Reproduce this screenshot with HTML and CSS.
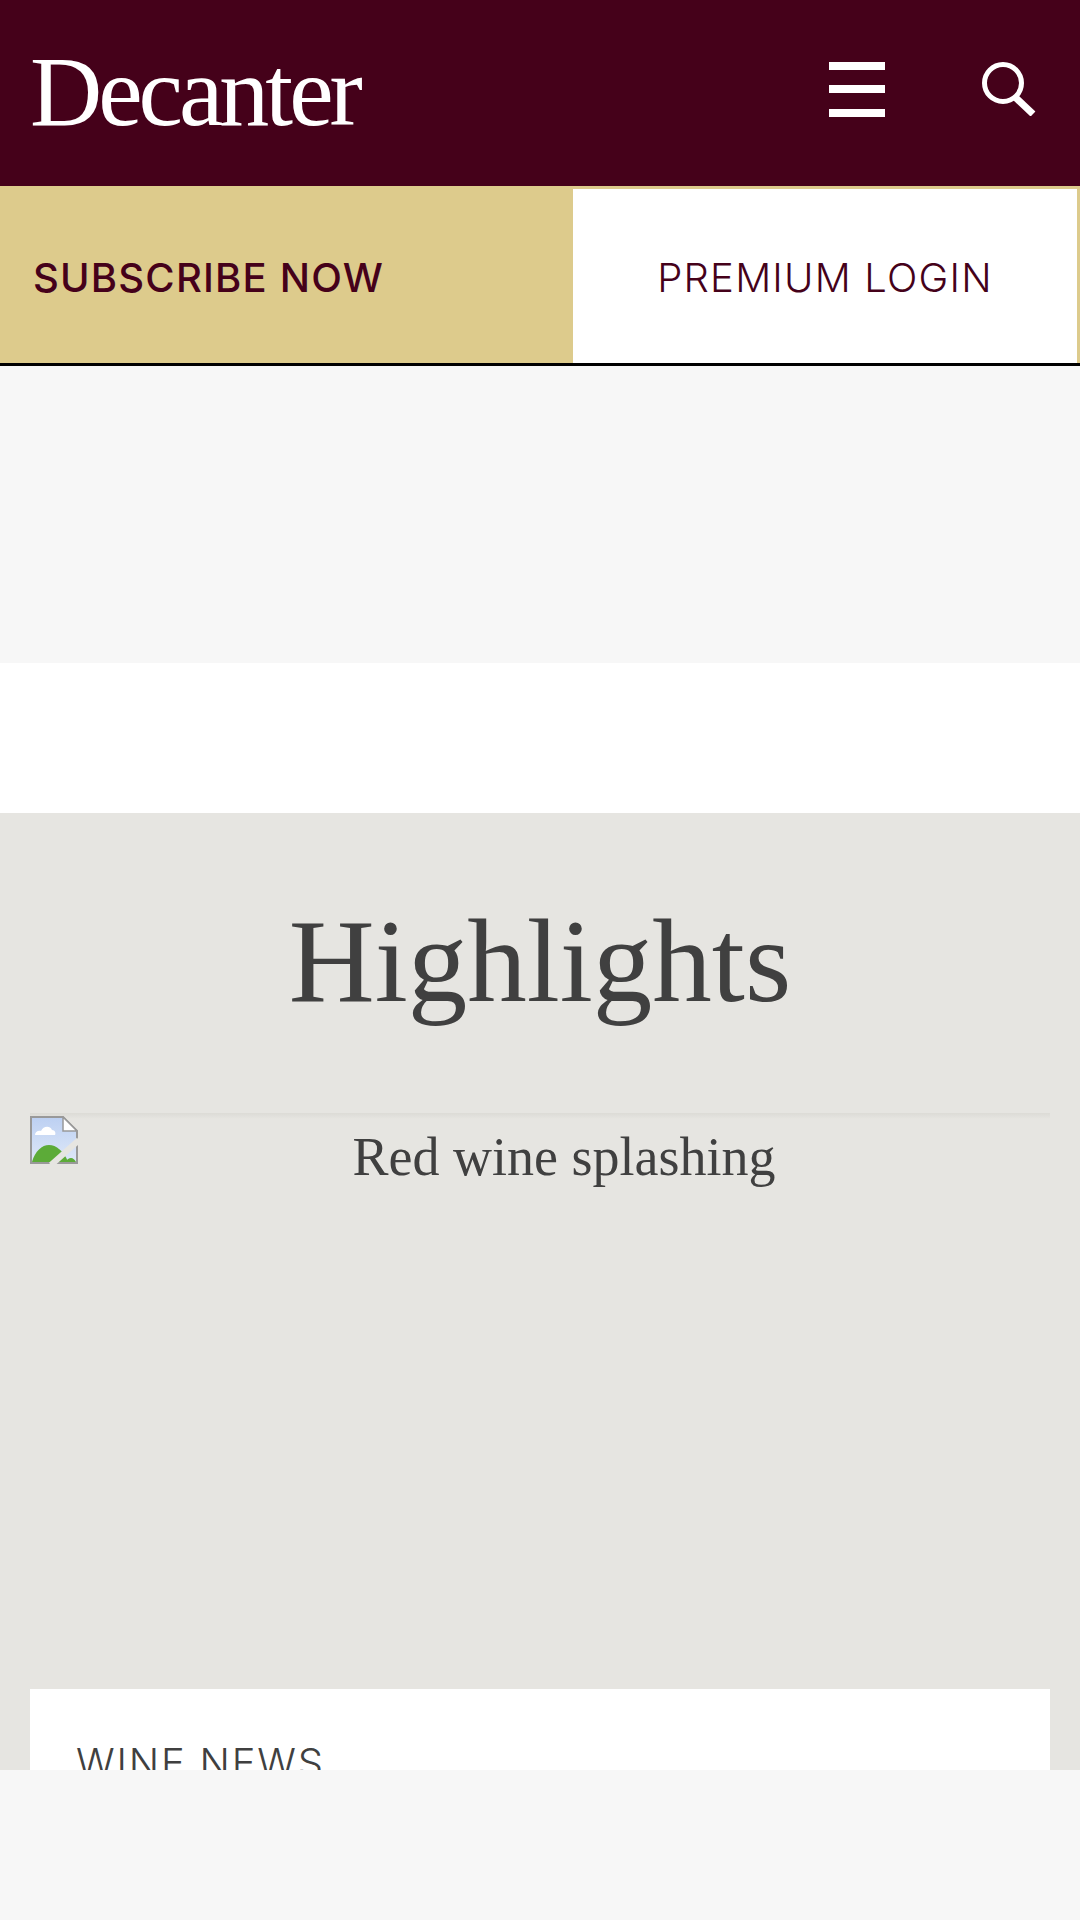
FILE: index.html
```html
<!DOCTYPE html>
<html lang="en">
<head>
<meta charset="utf-8">
<title>Decanter</title>
<link rel="stylesheet" href="styles.css">
</head>
<body>
<header class="masthead">
  <a class="logo">Decanter</a>
  <div class="masthead-icons">
    <div class="burger"><span></span><span></span><span></span></div>
    <svg class="search" viewBox="0 0 54 54" fill="none" stroke="#fff"><circle cx="21" cy="21" r="18.5" stroke-width="5"/><path d="M33 35 L51 52" stroke-width="7"/></svg>
  </div>
</header>
<nav class="account">
  <a class="btn btn-sub">SUBSCRIBE NOW</a>
  <a class="btn btn-login">PREMIUM LOGIN</a>
</nav>
<div class="ad-top"></div>
<main class="highlights">
  <h2 class="highlights-title">Highlights</h2>
  <div class="hero">
    <svg class="broken" viewBox="0 0 48 48">
      <defs><linearGradient id="sky" x1="0" y1="0" x2="0" y2="1"><stop offset="0" stop-color="#bcd0f2"/><stop offset="1" stop-color="#dfe8f8"/></linearGradient></defs>
      <path d="M1 1H33L47 15V47H1Z" fill="url(#sky)" stroke="#999" stroke-width="2"/>
      <path d="M33 1V15H47Z" fill="#fff" stroke="#999" stroke-width="1.5"/>
      <path d="M5 19c0-3 3-5 6-4 2-5 9-6 11-1 3 0 4 3 3 5Z" fill="#fff"/>
      <path d="M2 46c3-11 10-17 17-17s15 6 19 17Z" fill="#5cab38"/>
      <path d="M36 46c1-3 3-4 5-4s4 2 5 4Z" fill="#5cab38"/>
      <path d="M21 49L49 24" stroke="#e6e5e1" stroke-width="6"/>
    </svg>
    <div class="hero-alt">Red wine splashing</div>
  </div>
  <article class="card"><div class="card-kicker">WINE NEWS</div></article>
</main>
<div class="ad-bottom"></div>
</body>
</html>
```
FILE: styles.css
```css
* { box-sizing: border-box; }
html, body { margin: 0; padding: 0; height: 1920px; overflow: hidden; background: #fff; }
.masthead { height: 186px; background: #45011a; display: flex; align-items: center; justify-content: space-between; padding: 0 44px 0 30px; }
.logo { font-family: "Liberation Serif", serif; font-size: 100px; line-height: 1; color: #fff; letter-spacing: -4px; margin-bottom: 2px; }
.masthead-icons { display: flex; align-items: center; gap: 97px; margin-bottom: 8px; }
.burger { width: 56px; height: 55px; display: flex; flex-direction: column; justify-content: space-between; }
.burger span { height: 8px; background: #fff; }
.search { width: 54px; height: 54px; display: block; }
.account { display: flex; height: 180px; border-bottom: 3px solid #000; }
.btn { display: flex; align-items: center; font-family: Inter, sans-serif; font-size: 40px; letter-spacing: 1.2px; color: #45011a; }
.btn-sub { width: 573px; background: #ddcb8c; padding: 6px 0 0 33px; font-weight: 500; }
.btn-login { flex: 1; justify-content: center; background: #fff; border: 3px solid #ddcb8c; border-bottom: 0; border-left: 0; padding-top: 2px; font-weight: 300; }
.ad-top { height: 297px; background: #f7f7f7; margin-bottom: 150px; }
.highlights { background: #e6e5e1; padding: 0 30px; height: 1107px; }
.highlights-title { margin: 0; height: 300px; padding-top: 78px; text-align: center; font-family: "Liberation Serif", serif; font-weight: 400; font-size: 119px; line-height: 140px; color: #404040; }
.hero { height: 576px; display: flex; align-items: flex-start; background: linear-gradient(#dcdbd6, #e6e5e1 6px); }
.broken { width: 48px; height: 48px; flex: none; margin-top: 3px; }
.hero-alt { flex: 1; text-align: center; font-family: "Liberation Serif", serif; font-size: 54px; line-height: 62px; color: #404040; margin-top: 13px; }
.card { background: #fff; height: 300px; padding: 50px 46px 0; }
.card-kicker { font-family: Inter, sans-serif; font-weight: 300; font-size: 40px; letter-spacing: 1.8px; line-height: 48px; color: #404040; }
.ad-bottom { position: fixed; left: 0; right: 0; bottom: 0; height: 150px; background: #f7f7f7; }
```
